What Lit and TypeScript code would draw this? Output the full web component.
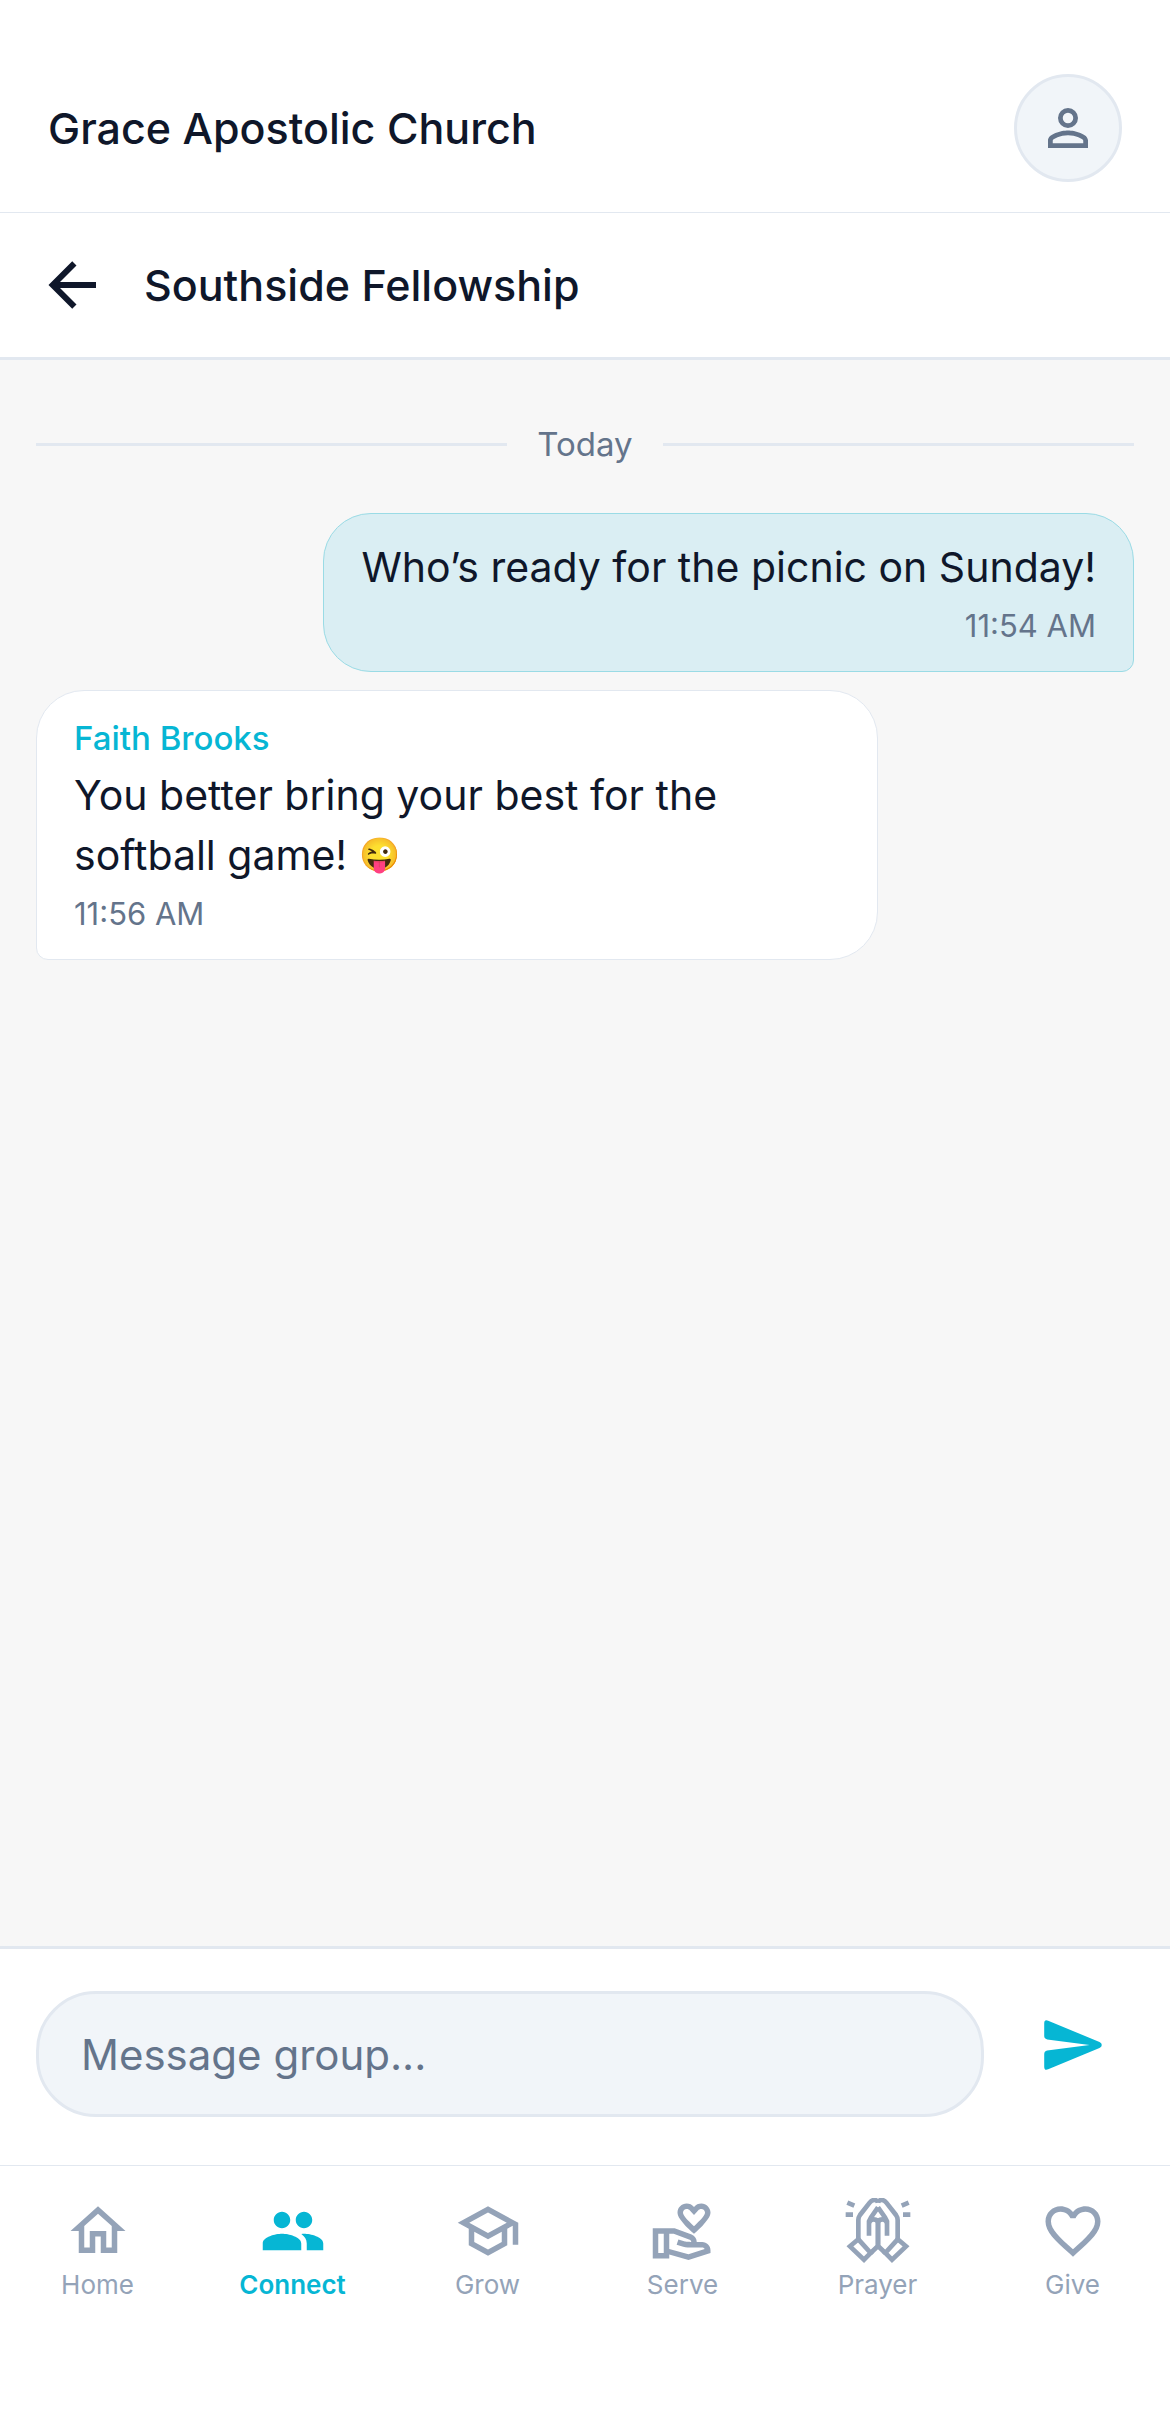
import { LitElement, html, svg, css, nothing } from "lit";
import { customElement, property } from "lit/decorators.js";
import { classMap } from "lit/directives/class-map.js";

const icons = {
  account: svg`<path d="M12 4a4 4 0 0 1 4 4 4 4 0 0 1-4 4 4 4 0 0 1-4-4 4 4 0 0 1 4-4m0 1.9a2.1 2.1 0 1 0 0 4.2A2.1 2.1 0 0 0 12 5.9m0 7.1c2.67 0 8 1.33 8 4v3H4v-3c0-2.67 5.33-4 8-4m0 1.9c-2.97 0-6.1 1.46-6.1 2.1v1.1h12.2V17c0-.64-3.13-2.1-6.1-2.1z"/>`,
  back: svg`<path d="M20 11v2H8l5.5 5.5-1.42 1.42L4.16 12l7.92-7.92L13.5 5.5 8 11h12z"/>`,
  home: svg`<path d="M12 5.69l5 4.5V18h-2v-6H9v6H7v-7.81l5-4.5M12 3L2 12h3v8h6v-6h2v6h6v-8h3L12 3z"/>`,
  people: svg`<path d="M16 11c1.66 0 2.99-1.34 2.99-3S17.66 5 16 5c-1.66 0-3 1.34-3 3s1.34 3 3 3zm-8 0c1.66 0 2.99-1.34 2.99-3S9.66 5 8 5C6.34 5 5 6.34 5 8s1.34 3 3 3zm0 2c-2.33 0-7 1.17-7 3.5V19h14v-2.5c0-2.33-4.67-3.5-7-3.5zm8 0c-.29 0-.62.02-.97.05 1.16.84 1.97 1.97 1.97 3.45V19h6v-2.5c0-2.33-4.67-3.5-7-3.5z"/>`,
  school: svg`<path d="M12 3L1 9l4 2.18v6L12 21l7-3.82v-6l2-1.09V17h2V9L12 3m6.82 6L12 12.72 5.18 9 12 5.28 18.82 9M17 16l-5 2.72L7 16v-3.73L12 15l5-2.73V16z"/>`,
  serve: svg`<path fill-rule="evenodd" d="M16 3.23C16.71 2.41 17.61 2 18.7 2C19.61 2 20.37 2.33 21 3C21.63 3.67 21.96 4.43 22 5.3C22 6 21.67 6.81 21 7.76C20.33 8.71 19.68 9.5 19.03 10.15C18.38 10.79 17.37 11.74 16 13C14.61 11.74 13.59 10.79 12.94 10.15C12.29 9.5 11.63 8.71 10.97 7.76C10.31 6.81 10 6 10 5.3C10 4.39 10.32 3.63 10.97 3C11.62 2.37 12.4 2.03 13.33 2C14.38 2 15.27 2.41 16 3.23ZM16 10.3C18.4 8 20 6.4 20 5.3C20 4.6 19.4 4 18.7 4C18.1 4 17.8 4.2 17.5 4.5L16 6.2L14.5 4.5C14.2 4.2 13.9 4 13.3 4C12.6 4 12 4.6 12 5.3C12 6.4 13.6 8 16 10.3ZM22 19V20L14 22.5L7 20.56V22H1V11H8.97L15.13 13.3C16.25 13.72 17 14.8 17 16H19C20.66 16 22 17.34 22 19ZM5 20V13H3V20H5ZM19.9 18.57C19.74 18.24 19.39 18 19 18H13.65C13.11 18 12.58 17.92 12.07 17.75L9.69 16.96L10.32 15.06L12.7 15.85C13 15.95 15 16 15 16C15 15.63 14.77 15.3 14.43 15.17L8.61 13H7V18.5L13.97 20.41L19.9 18.57Z"/>`,
  heart: svg`<path d="M12.1 18.55l-.1.1-.11-.1C7.14 14.24 4 11.39 4 8.5 4 6.5 5.5 5 7.5 5c1.54 0 3.04 1 3.57 2.36h1.86C13.46 6 14.96 5 16.5 5c2 0 3.5 1.5 3.5 3.5 0 2.89-3.14 5.74-7.9 10.05M16.5 3c-1.74 0-3.41.81-4.5 2.08C10.91 3.81 9.24 3 7.5 3 4.42 3 2 5.41 2 8.5c0 3.77 3.4 6.86 8.55 11.53L12 21.35l1.45-1.32C18.6 15.36 22 12.27 22 8.5 22 5.41 19.58 3 16.5 3z"/>`,
};

const prayingHand = svg`
  <path d="M40 130V66q0-8 5-15l29-37q6-8 14-8 9 0 11 8"/>
  <path d="M99 28L78 58l-6 12v43"/>
  <path d="M72 74q4-10 14-10 13 0 13 12v68L77 165"/>
  <path d="M15 145l25-21 37 41-20 20z"/>
  <path d="M7 14l21 9M2 50h22"/>`;

const glyph = (shape: unknown, name: string) =>
  html`<svg class=${name} viewBox="0 0 24 24" fill="currentColor" aria-hidden="true">${shape}</svg>`;

const prayerGlyph = html`<svg class="tab-icon" viewBox="0 0 198 198" fill="none" stroke="currentColor" stroke-width="14" aria-hidden="true">
  <g>${prayingHand}</g>
  <g transform="matrix(-1 0 0 1 198 0)">${prayingHand}</g>
</svg>`;

interface Message {
  author?: string;
  text: string;
  emoji?: string;
  time: string;
}

@customElement("chat-bubble")
export class ChatBubble extends LitElement {
  @property({ attribute: false }) message!: Message;

  static styles = css`
    :host {
      display: flex;
    }
    .bubble {
      box-sizing: border-box;
      max-width: 72vw;
      display: flex;
      flex-direction: column;
      padding: 23px 37px;
      border: 1px solid #e2e8f0;
      border-radius: 48px 48px 48px 12px;
      background: #ffffff;
    }
    .bubble.own {
      margin-left: auto;
      align-items: flex-end;
      border-color: #9adbe5;
      border-radius: 48px 48px 12px 48px;
      background: #daeef3;
    }
    .author {
      margin-bottom: 3px;
      font-size: 33px;
      line-height: 48px;
      font-weight: 500;
      color: #06b6d4;
    }
    .text {
      margin: 0;
      font-size: 41px;
      line-height: 60px;
      color: #0f172a;
    }
    .emoji {
      display: inline-block;
      font-size: 33px;
      line-height: 48px;
      vertical-align: text-top;
    }
    .time {
      margin-top: 6px;
      font-size: 31px;
      line-height: 45px;
      color: #64748b;
    }
  `;

  render() {
    const { author, text, emoji, time } = this.message;
    return html`<article class=${classMap({ bubble: true, own: !author })}>
      ${author ? html`<span class="author">${author}</span>` : nothing}
      <p class="text">${text}${emoji ? html` <span class="emoji">${emoji}</span>` : nothing}</p>
      <time class="time">${time}</time>
    </article>`;
  }
}

@customElement("app-root")
export class AppRoot extends LitElement {
  static styles = css`
    :host {
      display: flex;
      flex-direction: column;
      min-height: 100vh;
      background: #ffffff;
      color: #0f172a;
      font-family: Inter, "Liberation Sans", sans-serif;
      font-weight: 400;
      font-optical-sizing: none;
    }
    button {
      display: flex;
      align-items: center;
      justify-content: center;
      padding: 0;
      border: 0;
      background: none;
      color: inherit;
      cursor: pointer;
    }
    h1,
    h2 {
      margin: 0;
      font-size: 43px;
      line-height: 60px;
      font-weight: 500;
    }
    .topbar {
      display: flex;
      align-items: center;
      justify-content: space-between;
      padding: 74px 48px 30px;
      border-bottom: 1px solid #e2e8f0;
    }
    .avatar {
      width: 108px;
      height: 108px;
      border: 3px solid #e2e8f0;
      border-radius: 50%;
      background: #f1f5f9;
      color: #64748b;
    }
    .avatar-icon {
      width: 60px;
      height: 60px;
    }
    .subbar {
      display: flex;
      align-items: center;
      gap: 36px;
      padding: 36px;
      border-bottom: 3px solid #e2e8f0;
    }
    .back-icon {
      width: 72px;
      height: 72px;
    }
    .messages {
      flex: 1;
      display: flex;
      flex-direction: column;
      gap: 18px;
      padding: 60px 36px;
      background: #f7f7f7;
    }
    .day {
      display: flex;
      align-items: center;
      gap: 30px;
      margin-bottom: 27px;
      font-size: 33px;
      line-height: 48px;
      color: #64748b;
    }
    .rule {
      flex: 1;
      height: 3px;
      background: #e2e8f0;
    }
    .composer {
      display: flex;
      align-items: flex-start;
      gap: 28px;
      padding: 42px 36px 48px;
      border-top: 3px solid #e2e8f0;
    }
    .field {
      flex: 1;
      min-width: 0;
      box-sizing: border-box;
      height: 126px;
      padding: 0 42px;
      border: 3px solid #e2e8f0;
      border-radius: 60px;
      background: #f1f5f9;
      color: #0f172a;
      font: inherit;
      font-optical-sizing: none;
      font-size: 42px;
      outline: none;
    }
    .field::placeholder {
      color: #64748b;
      opacity: 1;
    }
    .send {
      width: 122px;
      height: 108px;
      color: #06b6d4;
    }
    .send-icon {
      width: 58px;
      height: 50px;
    }
    .tabs {
      display: grid;
      grid-template-columns: repeat(6, 1fr);
      padding: 32px 0 133px;
      border-top: 1px solid #e2e8f0;
    }
    .tab {
      display: flex;
      flex-direction: column;
      align-items: center;
      gap: 3px;
      font-size: 26px;
      line-height: 36px;
      color: #94a3b8;
      text-decoration: none;
    }
    .tab.active {
      color: #06b6d4;
      font-weight: 600;
    }
    .tab-icon {
      width: 66px;
      height: 66px;
    }
  `;

  private messages: Message[] = [
    { text: "Who’s ready for the picnic on Sunday!", time: "11:54 AM" },
    {
      author: "Faith Brooks",
      text: "You better bring your best for the softball game!",
      emoji: "😜",
      time: "11:56 AM",
    },
  ];

  private tabs = [
    { label: "Home", icon: glyph(icons.home, "tab-icon") },
    { label: "Connect", icon: glyph(icons.people, "tab-icon"), active: true },
    { label: "Grow", icon: glyph(icons.school, "tab-icon") },
    { label: "Serve", icon: glyph(icons.serve, "tab-icon") },
    { label: "Prayer", icon: prayerGlyph },
    { label: "Give", icon: glyph(icons.heart, "tab-icon") },
  ];

  render() {
    return html`
      <header class="topbar">
        <h1>Grace Apostolic Church</h1>
        <button class="avatar" aria-label="Profile">${glyph(icons.account, "avatar-icon")}</button>
      </header>
      <div class="subbar">
        <button aria-label="Back">${glyph(icons.back, "back-icon")}</button>
        <h2>Southside Fellowship</h2>
      </div>
      <main class="messages">
        <div class="day"><span class="rule"></span>Today<span class="rule"></span></div>
        ${this.messages.map((m) => html`<chat-bubble .message=${m}></chat-bubble>`)}
      </main>
      <form class="composer" @submit=${(e: Event) => e.preventDefault()}>
        <input class="field" type="text" aria-label="Message group" placeholder="Message group..." />
        <button class="send" type="submit" aria-label="Send">
          <svg class="send-icon" viewBox="0 0 175 152" fill="currentColor" aria-hidden="true">
            <path d="M0 10Q0-3 12 2L168 67Q175 70 175 76Q175 82 168 85L12 150Q0 155 0 142V104Q0 95 9 93L138 76L9 59Q0 57 0 49Z" />
          </svg>
        </button>
      </form>
      <nav class="tabs" aria-label="Main">
        ${this.tabs.map(
          (t) => html`<a
            class=${classMap({ tab: true, active: !!t.active })}
            href="#${t.label.toLowerCase()}"
            aria-current=${t.active ? "page" : nothing}
            >${t.icon}<span>${t.label}</span></a
          >`
        )}
      </nav>
    `;
  }
}
